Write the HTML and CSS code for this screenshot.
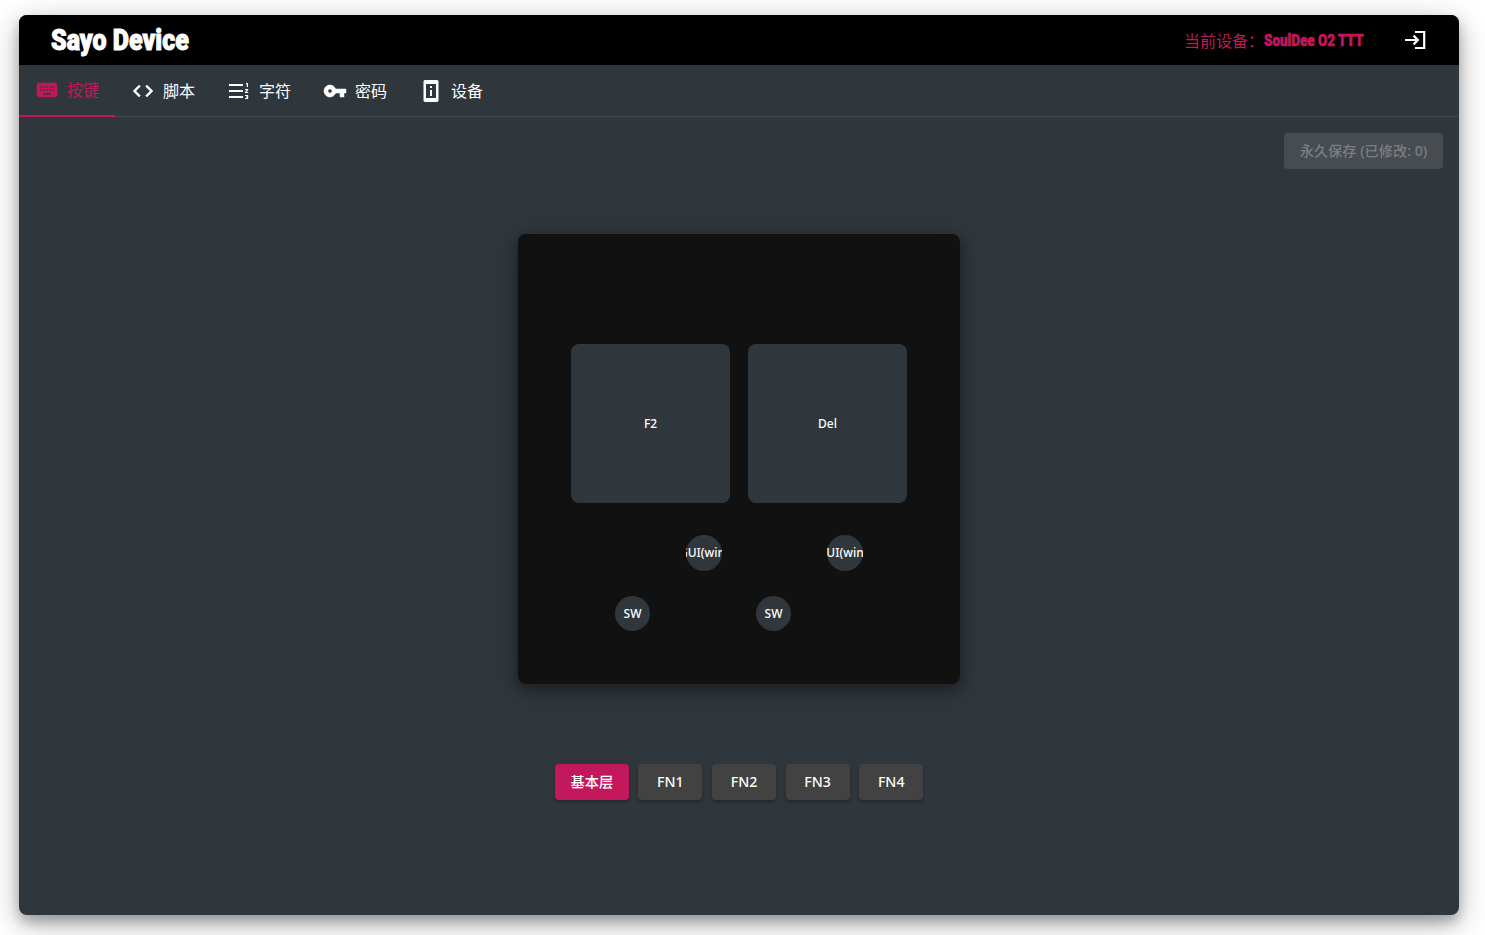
FILE: index.html
```html
<!DOCTYPE html>
<html lang="zh-CN">
<head>
<meta charset="utf-8">
<title>Sayo Device</title>
<link rel="stylesheet" href="styles.css">
</head>
<body>
<div class="window">
  <header class="topbar">
    <div class="brand"><span class="brand-text">Sayo Device</span></div>
    <div class="device">
      <span class="device-label">当前设备：</span>
      <span class="device-name"><span class="device-name-text">SoulDee O2 TTT</span></span>
      <svg class="icon exit" viewBox="0 0 24 24"><path d="M2 12h12M10.500 7.600 14.900 12l-4.400 4.400M12 4h9.200v16H12"/></svg>
    </div>
  </header>
  <nav class="tabs">
    <a class="tab active">
      <svg class="icon keyboard" viewBox="0 0 24 24"><path d="M20 5H4c-1.100 0-1.990.9-1.990 2L2 17c0 1.100.9 2 2 2h16c1.100 0 2-.9 2-2V7c0-1.100-.9-2-2-2zm-9 3h2v2h-2V8zm0 3h2v2h-2v-2zM8 8h2v2H8V8zm0 3h2v2H8v-2zm-1 2H5v-2h2v2zm0-3H5V8h2v2zm9 7H8v-2h8v2zm0-4h-2v-2h2v2zm0-3h-2V8h2v2zm3 3h-2v-2h2v2zm0-3h-2V8h2v2z"/></svg>
      <span>按键</span>
    </a>
    <a class="tab">
      <svg class="icon code" viewBox="0 0 24 24"><path d="M9.400 16.600 4.800 12l4.600-4.600L8 6l-6 6 6 6 1.400-1.400zm5.200 0 4.600-4.600-4.600-4.600L16 6l6 6-6 6-1.400-1.400z"/></svg>
      <span>脚本</span>
    </a>
    <a class="tab">
      <svg class="icon" viewBox="0 0 24 24"><path d="M2 5h14v2H2zM2 11h14v2H2zM2 17h14v2H2zM19 4h2v4h-1.300V5H19zM18 10h3.200v1L19.600 13h1.600v1H18v-1l1.600-2H18zM18 16h3.200v4H18v-1h2v-.5h-1v-1h1V17h-2z"/></svg>
      <span>字符</span>
    </a>
    <a class="tab">
      <svg class="icon key-icon" viewBox="0 0 24 24"><path d="M12.650 10C11.830 7.670 9.610 6 7 6c-3.310 0-6 2.690-6 6s2.690 6 6 6c2.610 0 4.830-1.670 5.650-4H17v4h4v-4h2v-4H12.650zM7 14c-1.100 0-2-.9-2-2s.9-2 2-2 2 .9 2 2-.9 2-2 2z"/></svg>
      <span>密码</span>
    </a>
    <a class="tab">
      <svg class="icon" viewBox="0 0 24 24"><path d="M11 7h2v2h-2zm0 4h2v6h-2zm7-9.990L6 1c-1.100 0-1.500.9-1.500 2v18c0 1.100.4 2 1.500 2h12c1.100 0 1.500-.9 1.500-2V3c0-1.100-.4-1.990-1.500-1.990zM17 19H7V5h10v14z"/></svg>
      <span>设备</span>
    </a>
  </nav>
  <main class="content">
    <div class="actions"><button class="save" disabled>永久保存 (已修改: 0)</button></div>
    <section class="board">
      <div class="keys">
        <div class="key">F2</div>
        <div class="key">Del</div>
      </div>
      <div class="switches upper">
        <div class="switch"><span>GUI(win</span></div>
        <div class="switch"><span>UI(win</span></div>
      </div>
      <div class="switches lower">
        <div class="switch"><span>SW</span></div>
        <div class="switch"><span>SW</span></div>
      </div>
    </section>
    <div class="layers">
      <button class="layer base">基本层</button>
      <button class="layer">FN1</button>
      <button class="layer">FN2</button>
      <button class="layer">FN3</button>
      <button class="layer">FN4</button>
    </div>
  </main>
</div>
</body>
</html>
```
FILE: styles.css
```css
* { box-sizing: border-box; }

body {
  margin: 0;
  height: 935px;
  padding: 15px 26px 20px 19px;
  overflow: hidden;
  background: #fff;
  color: #fff;
  font-family: "Noto Sans", "Noto Sans CJK SC", sans-serif;
}

.window {
  display: flex;
  flex-direction: column;
  height: 900px;
  border-radius: 8px;
  background: #2f363c;
  box-shadow: 0 7px 12px rgba(0, 0, 0, .22), 0 8px 30px rgba(0, 0, 0, .3);
}

.icon { width: 24px; height: 24px; flex: none; fill: currentColor; }
.keyboard { stroke: currentColor; stroke-width: .5; }
.code, .key-icon { stroke: currentColor; stroke-width: .5; }

.topbar {
  display: flex;
  align-items: center;
  justify-content: space-between;
  height: 50px;
  padding: 0 32px;
  border-radius: 8px 8px 0 0;
  background: #000;
}

.brand { width: 139px; }
.brand-text {
  display: inline-block;
  font: 900 30px/50px Roboto, sans-serif;
  white-space: nowrap;
  -webkit-text-stroke: 1px currentColor;
  transform: scaleX(.833);
  transform-origin: 0 50%;
}

.device { display: flex; align-items: center; color: #c2185b; font-size: 16px; }
.device-label { width: 80px; line-height: 24px; padding-bottom: 1px; white-space: nowrap; font-family: "Noto Sans CJK SC", sans-serif; }
.device-name { width: 100px; }
.device-name-text {
  display: inline-block;
  font: 900 17px/49px Roboto, sans-serif;
  white-space: nowrap;
  -webkit-text-stroke: .6px currentColor;
  transform: scaleX(.79);
  transform-origin: 0 50%;
}
.exit { margin-left: 39px; fill: none; stroke: #fff; stroke-width: 2.200; }

.tabs { display: flex; height: 52px; border-bottom: 1px solid #454a4d; }
.tab {
  display: flex;
  align-items: center;
  gap: 8px;
  width: 96px;
  height: 52px;
  padding-left: 16px;
  font-size: 16px;
  line-height: 24px;
  white-space: nowrap;
}
.tab.active { color: #c2185b; border-bottom: 2px solid #c2185b; }

.content { display: flex; flex: 1; flex-direction: column; align-items: center; }
.actions { display: flex; justify-content: flex-end; width: 100%; padding: 16px 16px 0 0; }

button { border: 0; border-radius: 4px; font-family: inherit; font-size: 14.200px; font-weight: 500; }
.save { width: 159px; height: 36px; padding: 0 0 2px; background: #474c51; color: #7b7f82; white-space: nowrap; }

.board {
  width: 442px;
  height: 450px;
  margin-top: 65px;
  padding: 110px 53px 0;
  border-radius: 8px;
  background: #111;
  box-shadow: 0 5px 8px rgba(0, 0, 0, .2), 0 5px 22px rgba(0, 0, 0, .32);
  font-size: 12px;
  font-weight: 500;
}
.keys { display: flex; gap: 18px; }
.key {
  display: flex;
  align-items: center;
  justify-content: center;
  width: 159px;
  height: 159px;
  border-radius: 8px;
  background: #2f363c;
}
.switches { display: flex; }
.upper { gap: 105.500px; margin: 32px 0 0 114.500px; }
.lower { gap: 106px; margin: 25px 0 0 44px; }
.switch {
  display: flex;
  align-items: center;
  justify-content: center;
  width: 35px;
  height: 35px;
  border-radius: 50%;
  background: #2f363c;
  white-space: nowrap;
}
.upper .switch { width: 36px; height: 36px; padding-bottom: 1px; }
.upper span {
  display: flex;
  justify-content: center;
  width: 36px;
  overflow: hidden;
}
.upper .switch:first-child span { justify-content: flex-start; text-indent: -6.500px; }

.layers { display: flex; gap: 9.600px; margin-top: 80px; }
.layer {
  width: 64px;
  height: 36px;
  padding: 0 0 2px;
  background: #424242;
  color: #fff;
  box-shadow: 0 2px 3px rgba(0, 0, 0, .3);
}
.layer.base { width: 74px; background: #c2185b; }
```
